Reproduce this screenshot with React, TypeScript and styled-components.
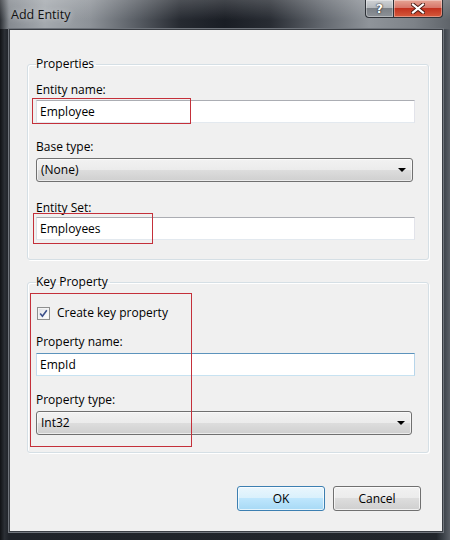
import * as React from "react";
import styled, { createGlobalStyle } from "styled-components";

const GlobalStyle = createGlobalStyle`
  html, body {
    margin: 0;
    padding: 0;
    background: #1b1e23;
  }
  * {
    box-sizing: border-box;
  }
`;

const App = () => {
  return (
    <>
      <GlobalStyle />
      <Window>
        <TitleBar>
          <Title>Add Entity</Title>
          <CaptionButtons>
            <HelpButton>?</HelpButton>
            <CloseButton>
              <svg width="14" height="11" viewBox="0 0 14 11">
                <path d="M2 1.5 L12 9.5 M12 1.5 L2 9.5" stroke="#4a1a12" strokeWidth="4" strokeLinecap="square" />
                <path d="M2 1.5 L12 9.5 M12 1.5 L2 9.5" stroke="#ffffff" strokeWidth="2.2" strokeLinecap="square" />
              </svg>
            </CloseButton>
          </CaptionButtons>
        </TitleBar>

        <Client>
          <Group>
            <Legend>Properties</Legend>
            <Field $top={10}>
              <Label $gap={2}>Entity name:</Label>
              <TextBox>Employee</TextBox>
            </Field>
            <Field $top={16}>
              <Label $gap={3}>Base type:</Label>
              <ComboBox>
                (None)
                <Arrow />
              </ComboBox>
            </Field>
            <Field $top={18}>
              <Label $gap={1}>Entity Set:</Label>
              <TextBox>Employees</TextBox>
            </Field>
          </Group>

          <Group $top={14} $bottom={17}>
            <Legend>Key Property</Legend>
            <CheckRow>
              <CheckBox>
                <svg width="9" height="9" viewBox="0 0 9 9">
                  <path d="M1.2 4.6 L3.4 7.2 L7.8 1.2" fill="none" stroke="#3b4f8a" strokeWidth="1.6" />
                </svg>
              </CheckBox>
              Create key property
            </CheckRow>
            <Field $top={13}>
              <Label $gap={3}>Property name:</Label>
              <TextBox $focused>EmpId</TextBox>
            </Field>
            <Field $top={16}>
              <Label $gap={3}>Property type:</Label>
              <ComboBox $narrow>
                Int32
                <Arrow />
              </ComboBox>
            </Field>
          </Group>

          <ButtonRow>
            <Button $primary>OK</Button>
            <Button>Cancel</Button>
          </ButtonRow>
        </Client>

        <Highlight $x={32} $y={98} $w={159} $h={26} />
        <Highlight $x={33} $y={213} $w={120} $h={31} />
        <Highlight $x={30} $y={293} $w={162} $h={154} />
      </Window>
    </>
  );
};

const Window = styled.div`
  position: relative;
  width: 450px;
  height: 540px;
  overflow: hidden;
  display: flex;
  flex-direction: column;
  background: linear-gradient(to right, #101215 0%, #2b2f35 1%, #1f2329 2%, #22262c 97%, #3c4249 98.5%, #5b6067 100%);
  font-family: "Segoe UI", "Open Sans", "Noto Sans", sans-serif;
  font-size: 12px;
  color: #000;
`;

const TitleBar = styled.div`
  height: 29px;
  flex: none;
  display: flex;
  align-items: flex-start;
  background:
    linear-gradient(to bottom, rgba(255, 255, 255, 0.18), rgba(255, 255, 255, 0) 70%),
    linear-gradient(to right, #2a2e33 0%, #858a90 2%, #a4a9ae 10%, #8d9298 20%, #5a5f66 30%, #262a31 40%, #191d24 50%, #282c33 60%, #646970 72%, #8f949a 82%, #7d8288 92%, #5f646a 100%);
`;

const Title = styled.div`
  padding: 6px 0 0 11px;
  font-size: 12.5px;
  color: #111;
  text-shadow: 0 0 6px rgba(255, 255, 255, 0.7);
`;

const CaptionButtons = styled.div`
  margin-left: auto;
  margin-right: 7px;
  display: flex;
`;

const CaptionButton = styled.div`
  height: 18px;
  display: flex;
  align-items: center;
  justify-content: center;
  border: 1px solid #2e3238;
  border-top: none;
  box-shadow: inset 0 0 0 1px rgba(255, 255, 255, 0.35);
`;

const HelpButton = styled(CaptionButton)`
  width: 28px;
  border-right: none;
  border-radius: 0 0 0 4px;
  background: linear-gradient(to bottom, #cfd2d5 0%, #b5b9bd 45%, #7b8086 50%, #8d9298 100%);
  color: #fff;
  font-family: "DejaVu Sans", sans-serif;
  font-weight: bold;
  font-size: 12px;
  text-shadow: 0 0 2px #222, 0 0 1px #222;
`;

const CloseButton = styled(CaptionButton)`
  width: 50px;
  border-radius: 0 0 4px 0;
  background: linear-gradient(to bottom, #e6a595 0%, #d7776a 45%, #c3321f 50%, #d65a3c 100%);
`;

const Client = styled.div`
  flex: 1;
  margin: 0 7px 8px 9px;
  display: flex;
  flex-direction: column;
  padding: 26px 13px 0 17px;
  background: #f0f0f0;
  border: 1px solid #3a3e44;
  box-shadow: 0 0 0 1px #70757c;
`;

const Group = styled.fieldset<{ $top?: number; $bottom?: number }>`
  margin: ${(p) => p.$top ?? 0}px 0 0 0;
  padding: 0 13px ${(p) => p.$bottom ?? 19}px 8px;
  border: 1px solid #d5dfe5;
  border-radius: 3px;
  box-shadow: inset 1px 1px 0 #fff, 1px 1px 0 #fff;
  min-width: 0;
`;

const Legend = styled.legend`
  padding: 0 2px 0 0;
  line-height: 16px;
  color: #000;
`;

const Field = styled.div<{ $top: number }>`
  margin-top: ${(p) => p.$top}px;
`;

const Label = styled.div<{ $gap: number }>`
  line-height: 16px;
  margin-bottom: ${(p) => p.$gap}px;
`;

const TextBox = styled.div<{ $focused?: boolean }>`
  height: 23px;
  line-height: 21px;
  padding-left: 3px;
  background: #fff;
  border: 1px solid;
  border-color: ${(p) =>
    p.$focused ? "#5c93bc #b7d5ea #c7e2f1 #c5daed" : "#abadb3 #e2e3ea #e3e9ef #dbdfe6"};
`;

const ComboBox = styled.div<{ $narrow?: boolean }>`
  position: relative;
  height: 24px;
  width: calc(100% - ${(p) => (p.$narrow ? 3 : 2)}px);
  line-height: 22px;
  padding-left: 4px;
  border: 1px solid #707070;
  border-radius: 3px;
  background: linear-gradient(to bottom, #f2f2f2 0%, #ebebeb 50%, #dddddd 50%, #cfcfcf 100%);
  box-shadow: inset 0 0 0 1px rgba(255, 255, 255, 0.6);
`;

const Arrow = styled.span`
  position: absolute;
  right: 6px;
  top: 9px;
  width: 0;
  height: 0;
  border-left: 4px solid transparent;
  border-right: 4px solid transparent;
  border-top: 4px solid #000;
`;

const CheckRow = styled.div`
  margin-top: 15px;
  display: flex;
  align-items: center;
  gap: 7px;
  line-height: 16px;
  padding-left: 1px;
`;

const CheckBox = styled.span`
  width: 13px;
  height: 13px;
  display: flex;
  align-items: center;
  justify-content: center;
  border: 1px solid #8e8f8f;
  background: linear-gradient(135deg, #dcdee3 0%, #f4f5f7 60%, #ffffff 100%);
  box-shadow: inset 0 0 0 1px #f4f4f4;
`;

const ButtonRow = styled.div`
  margin-top: 33px;
  padding-right: 8px;
  display: flex;
  justify-content: flex-end;
  gap: 8px;
`;

const Button = styled.div<{ $primary?: boolean }>`
  width: 88px;
  height: 25px;
  display: flex;
  align-items: center;
  justify-content: center;
  border-radius: 3px;
  border: 1px solid ${(p) => (p.$primary ? "#3c7fb1" : "#707070")};
  background: ${(p) =>
    p.$primary
      ? "linear-gradient(to bottom, #eaf6fd 0%, #d9f0fc 50%, #bee6fd 50%, #a7d9f5 100%)"
      : "linear-gradient(to bottom, #f2f2f2 0%, #ebebeb 50%, #dddddd 50%, #cfcfcf 100%)"};
  box-shadow: inset 0 0 0 1px rgba(255, 255, 255, 0.7);
`;

const Highlight = styled.div<{ $x: number; $y: number; $w: number; $h: number }>`
  position: absolute;
  left: ${(p) => p.$x}px;
  top: ${(p) => p.$y}px;
  width: ${(p) => p.$w}px;
  height: ${(p) => p.$h}px;
  border: 1px solid #c4303a;
  pointer-events: none;
`;

export default App;
